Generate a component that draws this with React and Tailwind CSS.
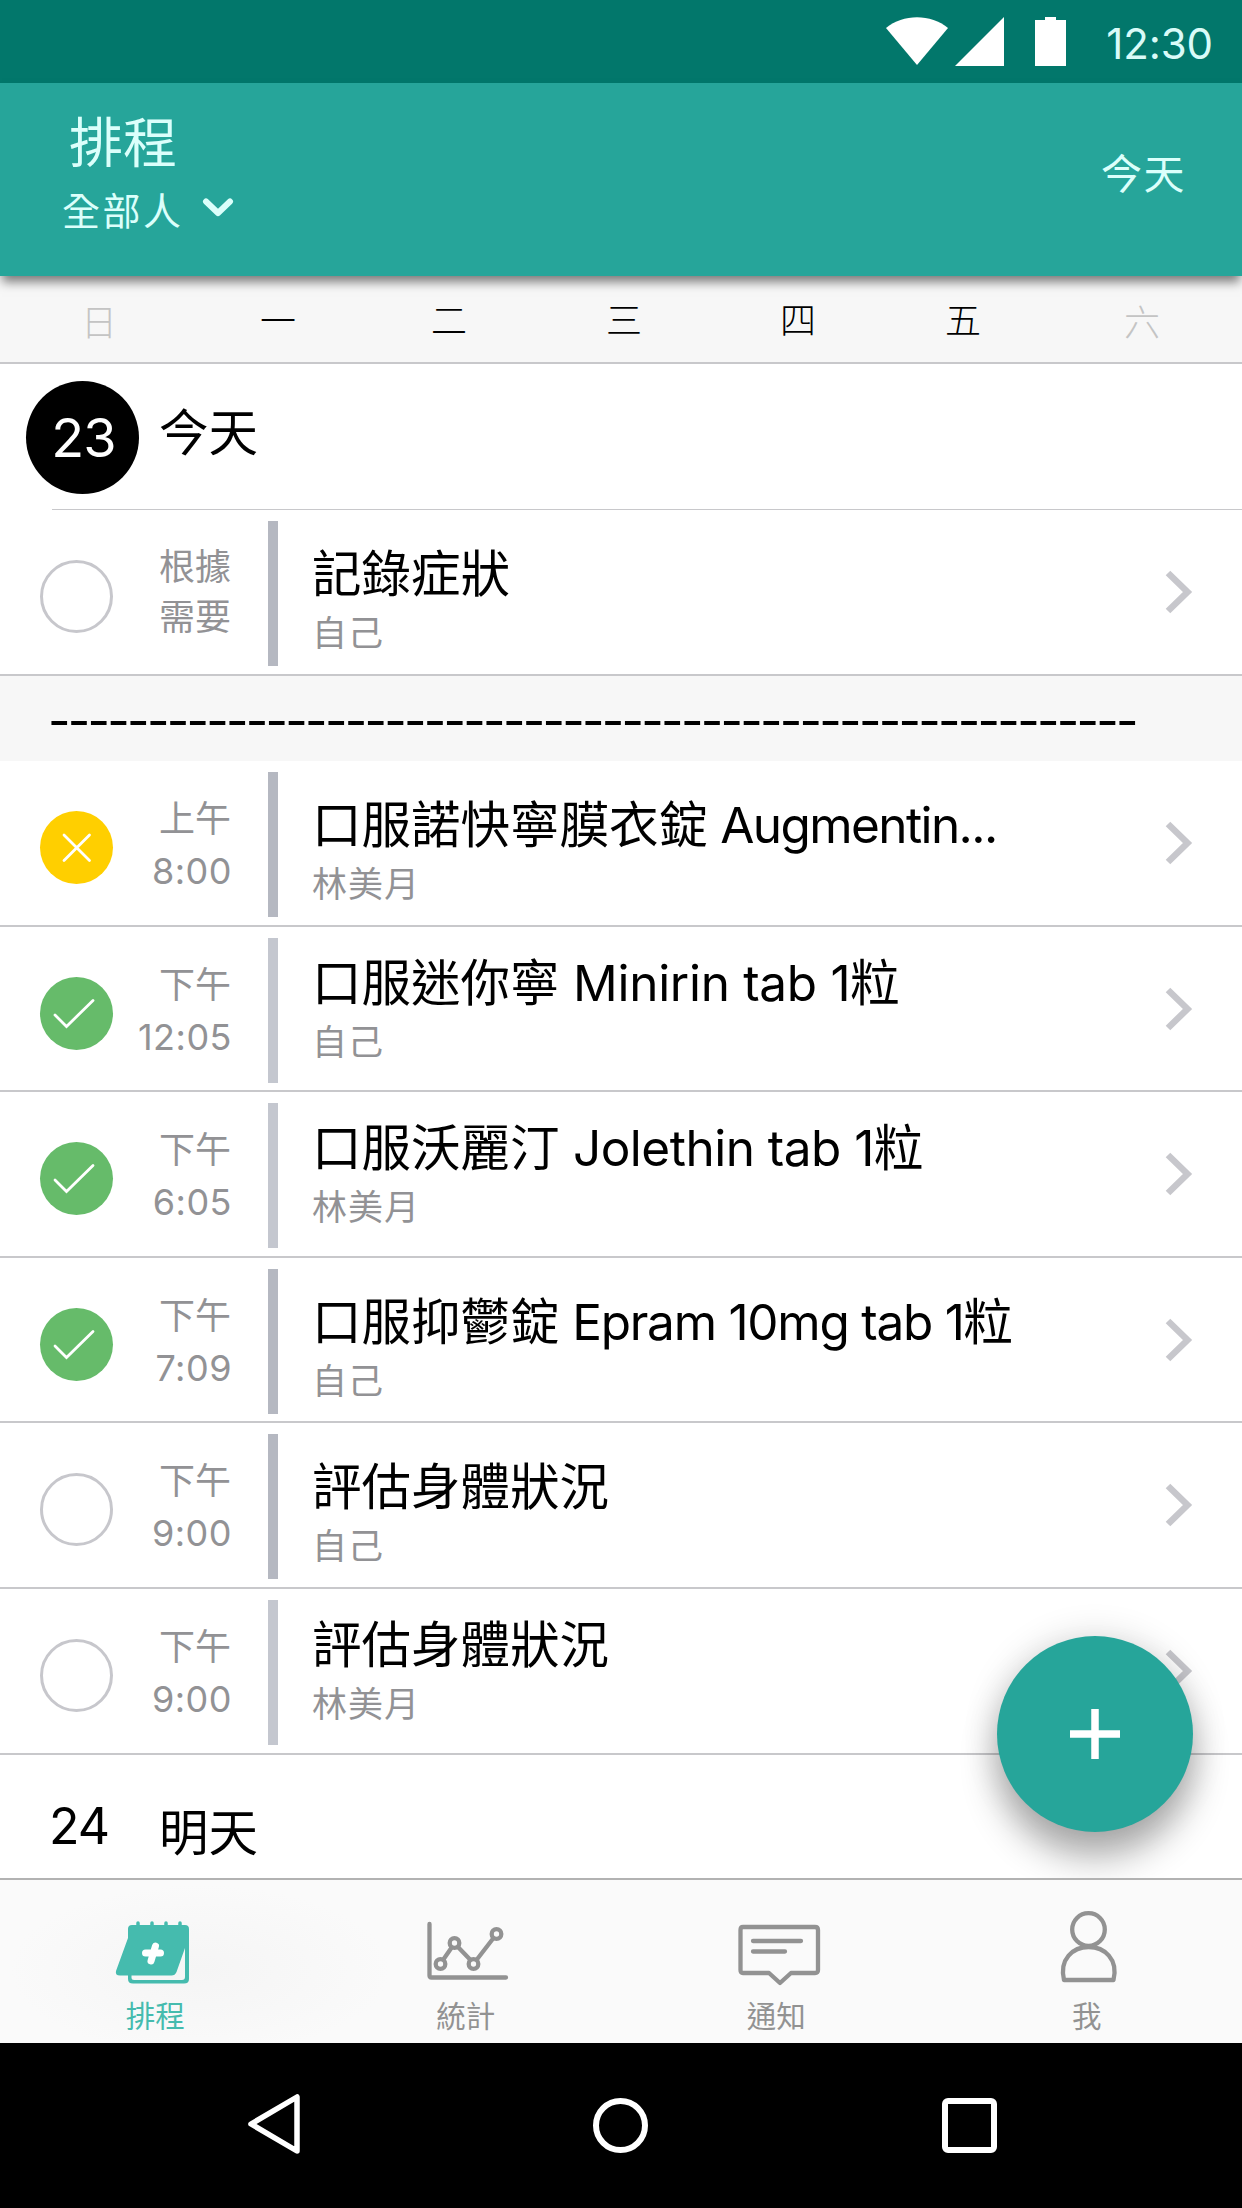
import clsx from "clsx";

// ─── Data ─────────────────────────────────────────────────────────────────────

const weekdays = [
  { label: "日", muted: true, className: "ml-[81px]" },
  { label: "一", className: "ml-[143px]" },
  { label: "二", className: "ml-[135px]" },
  { label: "三", className: "ml-[139px]" },
  { label: "四", className: "ml-[138px]" },
  { label: "五", className: "ml-[129px]" },
  { label: "六", muted: true, className: "ml-[143px]" },
];

const firstEntry = {
  status: "open",
  time: ["根據", "需要"],
  title: "記錄症狀",
  person: "自己",
};

const entries = [
  {
    status: "missed",
    time: ["上午", "8:00"],
    title: "口服諾快寧膜衣錠",
    latin: " Augmentin...",
    person: "林美月",
    tracking: "tracking-[-1.600px]",
  },
  {
    status: "done",
    time: ["下午", "12:05"],
    title: "口服迷你寧",
    latin: " Minirin tab 1",
    unit: "粒",
    person: "自己",
    tracking: "tracking-[-0.300px]",
    raised: true,
  },
  {
    status: "done",
    time: ["下午", "6:05"],
    title: "口服沃麗汀",
    latin: " Jolethin tab 1",
    unit: "粒",
    person: "林美月",
    tracking: "tracking-[-0.500px]",
    raised: true,
  },
  {
    status: "done",
    time: ["下午", "7:09"],
    title: "口服抑鬱錠",
    latin: " Epram 10mg tab 1",
    unit: "粒",
    person: "自己",
    tracking: "tracking-[-1.250px]",
  },
  {
    status: "open",
    time: ["下午", "9:00"],
    title: "評估身體狀況",
    person: "自己",
  },
  {
    status: "open",
    time: ["下午", "9:00"],
    title: "評估身體狀況",
    person: "林美月",
    raised: true,
  },
];

// ─── Status bar ───────────────────────────────────────────────────────────────

function StatusBar() {
  return (
    <div className="h-[83px] shrink-0 bg-[#02776b] flex items-start justify-end pr-[29px] text-white">
      <svg className="w-[180px] h-[50px] mt-[17px]" viewBox="0 0 180 50" fill="currentColor">
        <path d="M0 11C17-3.500 45-3.500 62 11L31 48Z" />
        <path d="M118 0V49H69Z" />
        <path d="M149 3H159V0H170V3H180V49H149Z" />
      </svg>
      <span className="ml-[40px] mt-[18px] text-[42px] leading-[52px] tracking-[-0.100px] text-[#d9fbf8]">
        12:30
      </span>
    </div>
  );
}

// ─── Header ───────────────────────────────────────────────────────────────────

function Header() {
  return (
    <header className="relative z-10 h-[193px] shrink-0 bg-[#26a59a] text-[#dbfffb] flex justify-between shadow-[0_8px_10px_-2px_rgba(0,0,0,0.5)]">
      <div className="pl-[62px] pt-[27px]">
        <h1 className="pl-[7px] text-[54px] leading-[68px]">排程</h1>
        <button className="flex items-center text-[38px] leading-[56px] mt-[5px] tracking-[2.500px]">
          全部人
          <svg className="w-[32px] h-[22px] ml-[18px] -mt-[7px]" viewBox="0 0 32 22" fill="none" stroke="currentColor">
            <path d="M4 4.500L16 16L28 4.500" strokeWidth="6" strokeLinecap="round" strokeLinejoin="round" />
          </svg>
        </button>
      </div>
      <button className="self-start mt-[63px] mr-[56px] text-[41px] leading-[56px] tracking-[1.500px]">
        今天
      </button>
    </header>
  );
}

// ─── Entry row ────────────────────────────────────────────────────────────────

function StatusMark({ status }) {
  if (status === "open") {
    return <div className="w-[73px] h-[73px] rounded-full border-[3px] border-[#c7c7cc]" />;
  }
  return (
    <div
      className={clsx(
        "w-[73px] h-[73px] rounded-full",
        status === "done" ? "bg-[#66bb6a]" : "bg-[#ffcf00]",
      )}
    >
      <svg className="w-full h-full" viewBox="0 0 73 73" fill="none" stroke="white" strokeWidth="2.800" strokeLinecap="round">
        {status === "done" ? (
          <path d="M15 38L26.500 49.500L53 23.500" />
        ) : (
          <path d="M24 24L49.500 49.500M49.500 24L24 49.500" />
        )}
      </svg>
    </div>
  );
}

function EntryRow({ entry }) {
  const { status, time, title, latin, unit, person, raised, tracking } = entry;
  const numeric = time[1].includes(":");
  return (
    <div className="h-[165.600px] shrink-0 flex items-start border-b-2 border-[#c8c8cb]">
      <div className="ml-[39.500px] mt-[50px]">
        <StatusMark status={status} />
      </div>
      <div
        className={clsx(
          "w-[118.500px] text-right text-[36px] leading-[50px] text-[#929295]",
          numeric ? "mt-[33px]" : "mt-[32px]",
        )}
      >
        <p>{time[0]}</p>
        <p className={clsx(numeric && "mt-[2px] -mr-[1px] tracking-[0.500px]")}>{time[1]}</p>
      </div>
      <div
        className={clsx(
          "w-[10px] h-[145px] mt-[11px] ml-[37px]",
          raised ? "bg-[#c4c7cf]" : "bg-[#b5b8c1]",
        )}
      />
      <div className={clsx("flex-1 min-w-0 ml-[34px]", raised ? "mt-[21px]" : "mt-[29px]")}>
        <p className="text-[49.500px] leading-[70px] text-black whitespace-pre">
          {title}
          {latin && <span className={tracking}>{latin}</span>}
          {unit}
        </p>
        <p className="text-[35px] leading-[50px] tracking-[1px] text-[#929295] -mt-[1px]">{person}</p>
      </div>
      <svg className="w-[28px] h-[44px] mt-[60px] mr-[49px]" viewBox="0 0 28 44" fill="none" stroke="#c7c7cc" strokeWidth="6.500">
        <path d="M3 3L22.500 22L3 41" />
      </svg>
    </div>
  );
}

// ─── Tab bar ──────────────────────────────────────────────────────────────────

function Tab({ label, active, children }) {
  return (
    <button
      className={clsx(
        "flex-1 flex flex-col items-center text-[29.500px] leading-[40px]",
        active ? "text-[#45bbae]" : "text-[#929292]",
      )}
    >
      <svg className="w-[90px] h-[90px] mt-[22px]" viewBox="0 0 90 90" fill="none" stroke="currentColor" strokeWidth="4.300">
        {children}
      </svg>
      <span className="mt-[4px]">{label}</span>
    </button>
  );
}

function TabBar() {
  return (
    <nav className="relative z-10 h-[165px] shrink-0 flex bg-[#fafafa] bg-[radial-gradient(ellipse_190px_85px_at_200px_90px,#f5f5f5,#fafafa)] border-t-2 border-[#b2b2b2]">
      <Tab label="排程" active>
        <path d="M28 21V28M42 21V28M56 21V28M70 21V28" strokeWidth="3.500" strokeLinecap="round" />
        <path
          d="M18 27Q18 23 22 23H75Q79 23 79 27V77Q79 81.500 74 81.500H23Q18 81.500 18 77V73.500H10Q5 73.500 6 69L18 36ZM75 46L66.500 70Q65 73.500 61.500 73.500H21.500V76Q21.500 78 24 78H72Q75 78 75 75Z"
          fill="currentColor"
          fillRule="evenodd"
          stroke="none"
        />
        <path d="M35.500 51H50.500M45.500 44L41 59" stroke="white" strokeWidth="7" strokeLinecap="round" />
      </Tab>
      <Tab label="統計">
        <path d="M8.500 22V73.500Q8.500 75.500 10.500 75.500H85" strokeLinecap="round" />
        <circle cx="19.500" cy="62" r="4.800" />
        <circle cx="33.500" cy="41" r="4.800" />
        <circle cx="52.500" cy="62" r="4.800" />
        <circle cx="75.500" cy="32" r="4.800" />
        <path d="M22 58L31 45M37 45L49.500 58M55.500 58L72.500 36" />
      </Tab>
      <Tab label="通知">
        <path d="M12 25H84Q87 25 87 28V68Q87 71 84 71H60L49 81L38 71H12Q9.500 71 9.500 68V28Q9.500 25 12 25Z" strokeLinejoin="round" />
        <path d="M22 39H70M22 49.500H54" strokeLinecap="round" />
      </Tab>
      <Tab label="我">
        <circle cx="46.500" cy="27.500" r="16.300" />
        <path d="M22 78C17 57 31 45 46.700 45S76.500 57 71.500 78Z" strokeLinejoin="round" />
      </Tab>
    </nav>
  );
}

function SystemNav() {
  return (
    <div className="h-[165px] shrink-0 bg-black flex items-start">
      <svg className="w-[60px] h-[70px] ml-[244px] mt-[46px]" viewBox="0 0 60 70" fill="none" stroke="white" strokeWidth="5.500" strokeLinejoin="round">
        <path d="M7 35L53 8V62Z" />
      </svg>
      <div className="w-[55px] h-[55px] ml-[289px] mt-[55px] rounded-full border-[6px] border-white" />
      <div className="w-[55px] h-[55px] ml-[294px] mt-[55px] rounded-[6px] border-[6px] border-white" />
    </div>
  );
}

// ─── App ──────────────────────────────────────────────────────────────────────

export default function App() {
  return (
    <div className="relative w-[1242px] h-[2208px] flex flex-col overflow-hidden bg-white font-['Inter','Noto_Sans_CJK_TC',sans-serif]">
      <StatusBar />
      <Header />

      <div className="h-[88px] shrink-0 flex items-center bg-[#f7f7f7] border-b-2 border-[#c8c8cb] pt-[3px] text-[36px] leading-[50px]">
        {weekdays.map((d) => (
          <span
            key={d.label}
            className={clsx("font-light", d.className, d.muted ? "text-[#c4c4c4] mt-[4px]" : "text-black")}
          >
            {d.label}
          </span>
        ))}
      </div>

      <main className="relative flex-1 min-h-0 flex flex-col overflow-hidden">
        <div className="h-[146px] shrink-0 flex items-start">
          <div className="w-[113px] h-[113px] ml-[26px] mt-[17px] pl-[2px] rounded-full bg-black text-white text-[54px] tracking-[-1px] flex items-center justify-center">
            23
          </div>
          <h2 className="ml-[20px] mt-[34px] text-[49.500px] leading-[70px] text-black">今天</h2>
        </div>
        <div className="h-px shrink-0 -mt-px ml-[52px] bg-[#c8c8cb]" />
        <EntryRow entry={firstEntry} />

        <div className="h-[85.500px] shrink-0 bg-[#f7f7f7] pl-[48px] pt-[10px] text-[49px] leading-[70px] tracking-[-2.760px] text-black whitespace-nowrap">
          {"-".repeat(55)}
        </div>

        {entries.map((entry, i) => (
          <EntryRow key={i} entry={entry} />
        ))}

        <div className="flex items-start text-black leading-[70px]">
          <span className="w-[110px] ml-[49px] mt-[36px] text-[50px] tracking-[-1px]">24</span>
          <h2 className="mt-[43px] text-[49.500px]">明天</h2>
        </div>

        <button className="absolute right-[49px] top-[1272px] w-[196px] h-[196px] rounded-full bg-[#26a59a] shadow-[0_26px_36px_rgba(0,0,0,0.3),0_0_36px_rgba(0,0,0,0.14)] flex items-center justify-center">
          <svg className="w-[50px] h-[50px]" viewBox="0 0 50 50" stroke="white" strokeWidth="7.500">
            <path d="M25 0V50M0 25H50" />
          </svg>
        </button>
      </main>

      <TabBar />
      <SystemNav />
    </div>
  );
}
